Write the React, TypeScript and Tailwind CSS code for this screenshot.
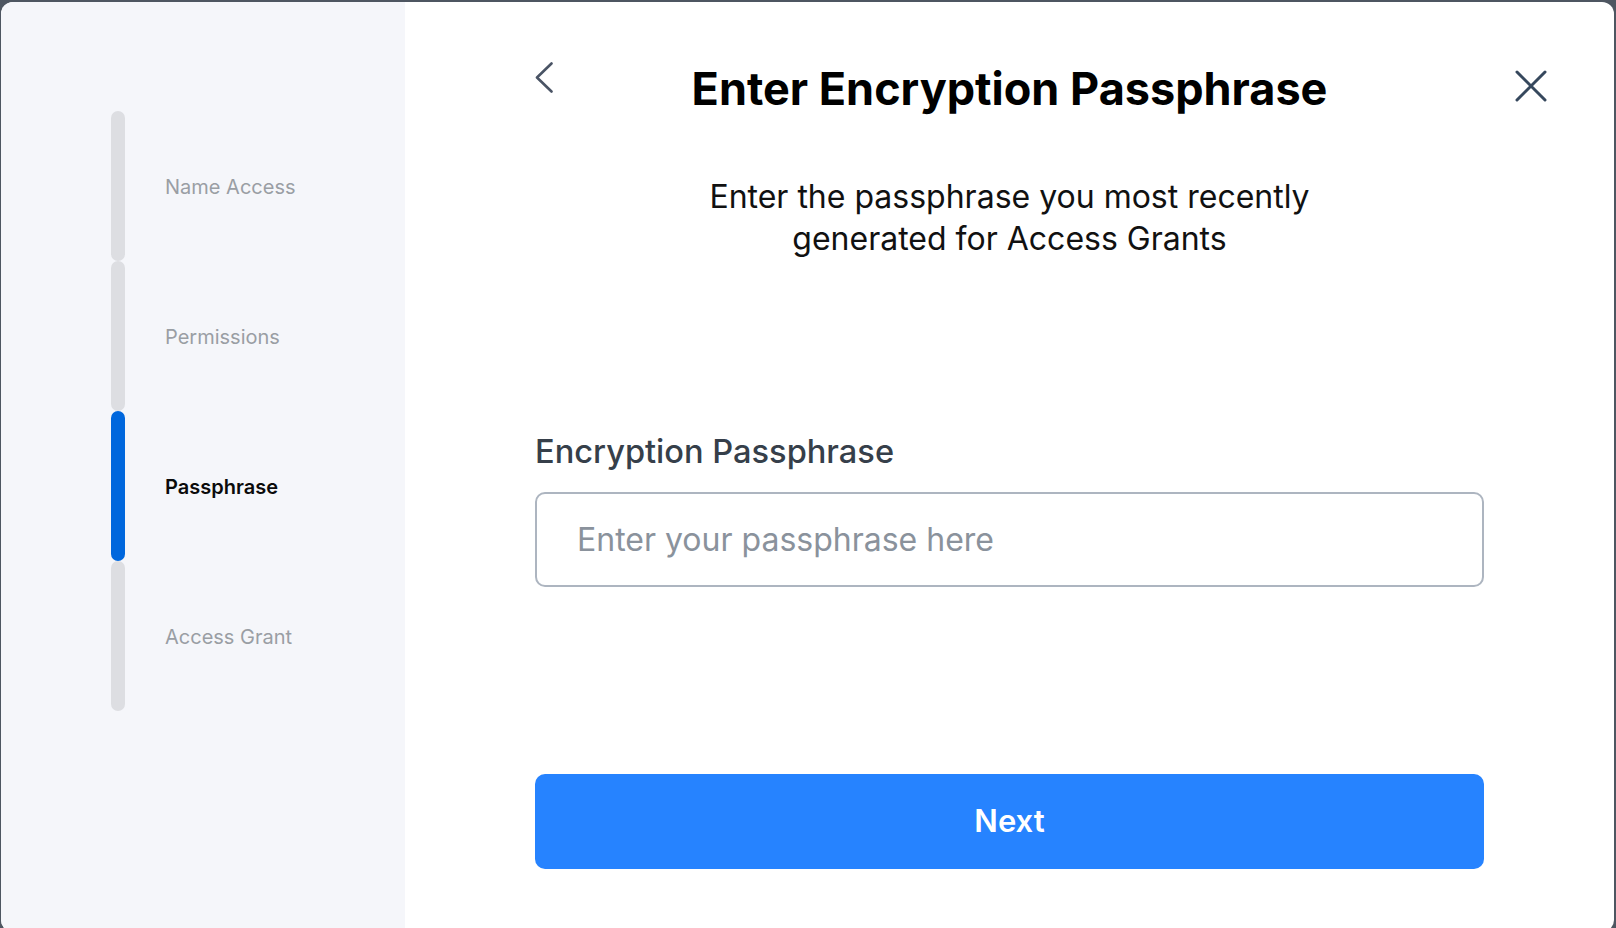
import { useState } from 'react';

const steps = [
  { label: 'Name Access', active: false },
  { label: 'Permissions', active: false },
  { label: 'Passphrase', active: true },
  { label: 'Access Grant', active: false },
];

function Stepper() {
  return (
    <div className="flex flex-col pl-[110px] pt-[109px]">
      {steps.map((s) => (
        <div key={s.label} className="flex h-[150px] items-center">
          <div
            className={`h-full w-[14px] rounded-full ${s.active ? 'bg-[#0067dd]' : 'bg-[#dddee2]'}`}
          />
          <span
            className={`ml-[40px] mt-[2px] text-[20px] ${
              s.active ? 'font-semibold text-[#0b0b0b]' : 'text-[#9a9ea4]'
            }`}
          >
            {s.label}
          </span>
        </div>
      ))}
    </div>
  );
}

export default function App() {
  const [passphrase, setPassphrase] = useState('');

  return (
    <div
      className="h-screen overflow-hidden bg-[#4e5661] pl-[1px] pr-[2px] pt-[2px]"
      style={{ fontFamily: 'Inter, "Noto Sans", sans-serif' }}
    >
      <div className="flex h-[930px] overflow-hidden rounded-[12px] bg-white">
        {/* Left step rail */}
        <aside className="w-[404px] shrink-0 bg-[#f5f6fa]">
          <Stepper />
        </aside>

        {/* Main panel */}
        <main className="flex flex-1 flex-col pt-[60px]">
          <div className="grid grid-cols-[1fr_auto_1fr] items-start">
            <div className="pl-[130px]">
              <button className="block text-[#4a5465]" aria-label="Back">
                <svg width="18" height="31" viewBox="0 0 18 31" fill="none">
                  <path
                    d="M16.5 1.5 L2 15.5 L16.5 29.5"
                    stroke="currentColor"
                    strokeWidth="2.6"
                    strokeLinecap="round"
                    strokeLinejoin="round"
                  />
                </svg>
              </button>
            </div>
            <h1 className="text-[45px] font-bold leading-[54px] text-black">
              Enter Encryption Passphrase
            </h1>
            <div className="flex justify-end pr-[67px]">
              <button className="mt-[8px] block text-[#36485d]" aria-label="Close">
                <svg width="32" height="32" viewBox="0 0 32 32" fill="none">
                  <path
                    d="M2 2 L30 30 M30 2 L2 30"
                    stroke="currentColor"
                    strokeWidth="3"
                    strokeLinecap="round"
                  />
                </svg>
              </button>
            </div>
          </div>

          <div className="flex flex-col px-[130px]">
            <p className="mx-auto mt-[60px] text-center text-[32px] leading-[42px] text-[#111111]">
              Enter the passphrase you most recently
              <br />
              generated for Access Grants
            </p>

            <label className="mt-[172px] text-[32.6px] font-medium leading-[38px] text-[#363f4a]">
              Encryption Passphrase
            </label>
            <input
              type="password"
              value={passphrase}
              onChange={(e) => setPassphrase(e.target.value)}
              placeholder="Enter your passphrase here"
              className="mt-[22px] h-[95px] w-full rounded-[10px] border-2 border-[#adb5c0] pl-[40px] text-[32px] text-[#222] outline-none placeholder:text-[#8a929c]"
            />

            <button className="mt-[187px] h-[95px] w-full rounded-[10px] bg-[#2683ff] text-[31px] font-semibold text-white">
              Next
            </button>
          </div>
        </main>
      </div>
    </div>
  );
}
